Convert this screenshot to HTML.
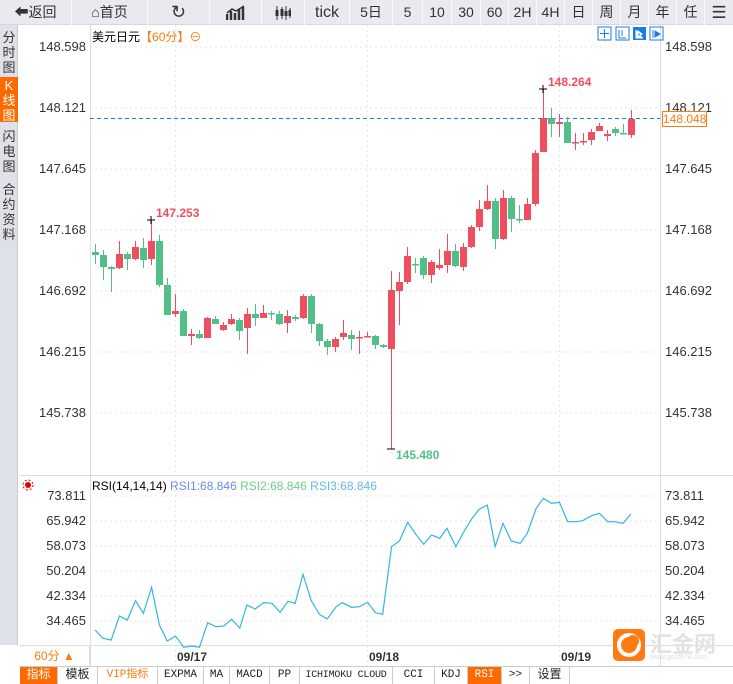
<!DOCTYPE html>
<html><head><meta charset="utf-8"><style>
*{margin:0;padding:0;box-sizing:border-box}
body{width:733px;height:684px;overflow:hidden;background:#fff;font-family:"Liberation Sans","Noto Sans CJK SC",sans-serif;position:relative;color:#333}
.top{position:absolute;left:0;top:0;width:733px;height:25px;background:#e9e9ef;border-bottom:1px solid #d6d6de}
.top div{position:absolute;top:0;height:25px;line-height:25px;text-align:center;font-size:14px;color:#333;border-right:1px solid #fafafc;white-space:nowrap}
.side{position:absolute;left:0;top:25px;width:18px;height:620px;background:#dfe1e8;border-right:1px solid #ccc}
.side div{position:absolute;left:0;width:18px;font-size:13px;line-height:15px;text-align:center;color:#333}
.ax{position:absolute;font-size:13px;color:#333;line-height:14px}
.bot{position:absolute;top:667px;height:17px;line-height:17px;font-size:11px;font-family:"Liberation Mono","Noto Sans CJK SC",monospace;text-align:center;border-right:1px solid #ccc;color:#222;white-space:nowrap;overflow:hidden}
</style></head><body>
<div class="top">
<div style="left:0;width:72px">&#x2B05;&#xFE0E;返回</div>
<div style="left:72px;width:76px">&#x2302;首页</div>
<div style="left:148px;width:62px;font-size:18px">&#x21BB;</div>
<div style="left:210px;width:52px"><svg width="20" height="16" viewBox="0 0 20 16" style="vertical-align:middle"><path d="M1 15V9M5 15V6M9 15V8M13 15V4M17 15V2" stroke="#333" stroke-width="2.5"/><path d="M1 8L6 4L10 6L18 1" stroke="#333" stroke-width="1.5" fill="none"/></svg></div>
<div style="left:262px;width:43px"><svg width="16" height="14" viewBox="0 0 16 14" style="vertical-align:middle"><path d="M2 0V14M7 1V13M11 0V14M15 2V12" stroke="#333" stroke-width="1"/><rect x="0.5" y="4" width="3" height="6" fill="#333"/><rect x="5.5" y="3" width="3" height="7" fill="#333"/><rect x="9.5" y="5" width="3" height="5" fill="#333"/><rect x="13.5" y="4" width="3" height="6" fill="#333"/></svg></div>
<div style="left:305px;width:45px;font-size:16px">tick</div>
<div style="left:350px;width:43px">5日</div>
<div style="left:393px;width:30px">5</div>
<div style="left:423px;width:29px">10</div>
<div style="left:452px;width:29px">30</div>
<div style="left:481px;width:28px">60</div>
<div style="left:509px;width:28px">2H</div>
<div style="left:537px;width:28px">4H</div>
<div style="left:565px;width:28px">日</div>
<div style="left:593px;width:28px">周</div>
<div style="left:621px;width:28px">月</div>
<div style="left:649px;width:28px">年</div>
<div style="left:677px;width:28px">任</div>
<div style="left:705px;width:28px;font-size:17px;border:none">&#x2630;</div>
</div>
<div class="side">
<div style="top:5px">分<br>时<br>图</div>
<div style="top:52px;height:45px;background:#ff6a00;color:#fff;padding-top:1px">K<br>线<br>图</div>
<div style="top:104px">闪<br>电<br>图</div>
<div style="top:157px">合<br>约<br>资<br>料</div>
</div>
<svg style="position:absolute;left:0;top:0" width="733" height="684" id="c">
<g stroke="#e6e6e6" stroke-dasharray="2,3" stroke-width="1">
<line x1="90" x2="660" y1="47" y2="47"/><line x1="90" x2="660" y1="108" y2="108"/><line x1="90" x2="660" y1="169" y2="169"/><line x1="90" x2="660" y1="230" y2="230"/><line x1="90" x2="660" y1="291" y2="291"/><line x1="90" x2="660" y1="352" y2="352"/><line x1="90" x2="660" y1="413" y2="413"/>
<line x1="90" x2="660" y1="496" y2="496"/><line x1="90" x2="660" y1="521" y2="521"/><line x1="90" x2="660" y1="546" y2="546"/><line x1="90" x2="660" y1="571" y2="571"/><line x1="90" x2="660" y1="596" y2="596"/><line x1="90" x2="660" y1="621" y2="621"/>
<line x1="175.5" x2="175.5" y1="25" y2="666"/><line x1="367.5" x2="367.5" y1="25" y2="666"/><line x1="559.5" x2="559.5" y1="25" y2="666"/>
</g>
<line x1="90.5" x2="90.5" y1="25" y2="667" stroke="#ddd"/>
<line x1="660.5" x2="660.5" y1="25" y2="667" stroke="#ddd"/>
<line x1="19" x2="733" y1="475.5" y2="475.5" stroke="#ddd"/>
<line x1="19" x2="733" y1="645.5" y2="645.5" stroke="#ddd"/>
<line x1="19" x2="733" y1="666.5" y2="666.5" stroke="#ccc"/>
<line x1="90" x2="660" y1="118.5" y2="118.5" stroke="#1a7ee6" stroke-dasharray="4,3"/>
<g id="k"></g>
<g transform="translate(88,480) scale(0.35714,0.33333)"><polyline fill="none" stroke="#33b4e6" stroke-width="1.2" vector-effect="non-scaling-stroke" points="20,450 42,475 65,480 88,408 110,420 133,362 155,400 178,322 200,435 222,483 245,468 268,502 290,498 312,502 335,428 358,440 380,438 402,418 425,444 445,375 468,387 492,368 515,370 538,397 560,364 580,370 602,283 625,362 648,403 670,417 695,380 712,368 738,382 760,380 783,367 805,398 825,403 850,200 872,183 895,127 918,163 940,193 962,165 985,175 1005,145 1030,200 1050,160 1072,120 1095,88 1118,75 1140,200 1162,130 1185,183 1210,190 1230,160 1255,85 1275,55 1298,70 1320,67 1343,125 1368,125 1385,122 1410,107 1432,100 1455,125 1475,125 1498,130 1520,102"/></g>
<path d="M147 220h8M151 216v8M539 89h8M543 85v8M387 449h8" stroke="#000" stroke-width="1"/>
<g fill="#1a7ee6"><rect x="598" y="27" width="13" height="13" fill="none" stroke="#1a7ee6"/><rect x="616" y="27" width="13" height="13" fill="none" stroke="#1a7ee6"/><rect x="633" y="27" width="13" height="13"/><rect x="650" y="27" width="13" height="13" fill="none" stroke="#1a7ee6"/>
<path d="M604.5 29v9M600 33.5h9" stroke="#1a7ee6" fill="none"/><path d="M619 30v8h7M622 30v6" stroke="#1a7ee6" fill="none"/><path d="M636 30v8h7M638 31l4 3-4 3z" stroke="#fff" fill="#fff"/><path d="M653 30v8M655 31l5 3-5 3z" stroke="#1a7ee6"/></g>
<circle cx="28" cy="485" r="3" fill="#e00"/><circle cx="28" cy="485" r="5" fill="none" stroke="#e00" stroke-dasharray="2,2"/>
<rect x="613" y="629" width="32" height="32" rx="5" fill="#ff7a10"/><circle cx="629" cy="645" r="10" fill="none" stroke="#fff" stroke-width="4"/><circle cx="633" cy="641" r="6" fill="#ff7a10"/>
</svg>
<div style="position:absolute;left:92px;top:28px;font-size:12px;color:#000">美元日元<span style="color:#ff7a10">【60分】⊖</span></div>
<div class="ax" style="right:647px;top:40px">148.598</div><div class="ax" style="right:647px;top:101px">148.121</div><div class="ax" style="right:647px;top:162px">147.645</div><div class="ax" style="right:647px;top:223px">147.168</div><div class="ax" style="right:647px;top:284px">146.692</div><div class="ax" style="right:647px;top:345px">146.215</div><div class="ax" style="right:647px;top:406px">145.738</div>
<div class="ax" style="left:665px;top:40px">148.598</div><div class="ax" style="left:665px;top:101px">148.121</div><div class="ax" style="left:665px;top:162px">147.645</div><div class="ax" style="left:665px;top:223px">147.168</div><div class="ax" style="left:665px;top:284px">146.692</div><div class="ax" style="left:665px;top:345px">146.215</div><div class="ax" style="left:665px;top:406px">145.738</div>
<div style="position:absolute;left:662px;top:111px;width:45px;height:16px;border:1px solid #ff7a10;background:#fff;color:#ff7a10;font-size:12px;line-height:14px;text-align:center">148.048</div>
<div style="position:absolute;left:156px;top:206px;font-size:12px;font-weight:bold;color:#ee4e5e">147.253</div>
<div style="position:absolute;left:548px;top:75px;font-size:12px;font-weight:bold;color:#ee4e5e">148.264</div>
<div style="position:absolute;left:396px;top:448px;font-size:12px;font-weight:bold;color:#52be88">145.480</div>
<div style="position:absolute;left:92px;top:479px;font-size:12px;color:#000">RSI(14,14,14) <span style="color:#6b8cf0">RSI1:68.846</span> <span style="color:#6ccc90">RSI2:68.846</span> <span style="color:#66b8e6">RSI3:68.846</span></div>
<div class="ax" style="right:647px;top:489px">73.811</div><div class="ax" style="right:647px;top:514px">65.942</div><div class="ax" style="right:647px;top:539px">58.073</div><div class="ax" style="right:647px;top:564px">50.204</div><div class="ax" style="right:647px;top:589px">42.334</div><div class="ax" style="right:647px;top:614px">34.465</div>
<div class="ax" style="left:665px;top:489px">73.811</div><div class="ax" style="left:665px;top:514px">65.942</div><div class="ax" style="left:665px;top:539px">58.073</div><div class="ax" style="left:665px;top:564px">50.204</div><div class="ax" style="left:665px;top:589px">42.334</div><div class="ax" style="left:665px;top:614px">34.465</div>
<div style="position:absolute;left:650px;top:627px;font-size:22px;color:#e2e2e2;font-weight:bold">汇金网</div>
<div style="position:absolute;left:650px;top:654px;font-size:7px;color:#ddd">www.gold678.com</div>
<div style="position:absolute;left:20px;top:646px;width:70px;height:20px;line-height:20px;text-align:center;color:#ff7a10;font-size:12px;border-right:1px solid #ddd">60分 ▲</div>
<div style="position:absolute;left:177px;top:650px;font-size:12px;font-weight:bold">09/17</div>
<div style="position:absolute;left:369px;top:650px;font-size:12px;font-weight:bold">09/18</div>
<div style="position:absolute;left:561px;top:650px;font-size:12px;font-weight:bold">09/19</div>
<div class="bot" style="left:20px;width:38px;background:#ff6a00;color:#fff;font-size:12px">指标</div>
<div class="bot" style="left:58px;width:40px;font-size:12px">模板</div>
<div class="bot" style="left:98px;width:60px;color:#ff7a10">VIP指标</div>
<div class="bot" style="left:158px;width:46px">EXPMA</div>
<div class="bot" style="left:204px;width:26px">MA</div>
<div class="bot" style="left:230px;width:40px">MACD</div>
<div class="bot" style="left:270px;width:30px">PP</div>
<div class="bot" style="left:300px;width:93px;font-size:10px;letter-spacing:-0.2px">ICHIMOKU CLOUD</div>
<div class="bot" style="left:393px;width:42px">CCI</div>
<div class="bot" style="left:435px;width:33px">KDJ</div>
<div class="bot" style="left:468px;width:34px;background:#ff6a00;color:#fff">RSI</div>
<div class="bot" style="left:502px;width:28px">&gt;&gt;</div>
<div class="bot" style="left:530px;width:40px;font-size:12px">设置</div>
<script>
var d=[[95,0,252,255,244,264],[103,0,255,267,250,280],[111,0,267,269,266,292],[119,1,254,268,241,269],[127,0,254,259,252,270],[135,1,247,259,241,260],[143,0,248,260,238,268],[151,1,241,259,220,265],[159,0,241,285,235,287],[167,0,285,315,278,315],[175,1,311,314,294,317],[183,0,311,336,309,336],[191,1,334,336,329,345],[199,0,334,338,330,339],[207,1,318,338,317,338],[215,0,319,324,316,324],[223,1,325,330,322,331],[231,1,319,324,314,325],[239,0,320,331,318,340],[247,1,314,328,308,354],[255,0,314,318,304,326],[263,1,313,318,305,318],[271,0,313,314,311,320],[279,0,314,324,311,325],[287,1,316,323,310,333],[295,0,317,319,315,321],[303,1,296,318,294,319],[311,0,296,324,294,333],[319,0,324,341,323,346],[327,0,341,347,339,355],[335,1,339,347,337,352],[343,1,333,337,320,340],[351,0,335,339,330,350],[359,1,337,338,331,354],[367,1,336,337,332,337],[375,0,336,345,335,349],[383,0,345,347,344,348],[391,1,290,349,271,449],[399,1,282,291,272,325],[407,1,256,282,247,284],[415,0,264,265,258,273],[423,0,258,275,256,279],[431,1,262,275,260,283],[439,1,265,268,249,270],[447,1,251,265,234,273],[455,0,251,266,244,267],[463,1,247,267,243,271],[471,1,227,247,225,248],[479,1,209,227,200,231],[487,1,201,209,185,210],[495,0,201,239,198,249],[503,1,198,239,190,240],[511,0,198,219,196,232],[519,0,219,220,205,223],[527,1,204,220,198,220],[535,1,153,204,150,206],[543,1,118,152,89,152],[551,0,118,124,108,137],[559,1,122,124,114,137],[567,0,122,143,117,143],[575,1,142,143,133,150],[583,1,141,142,133,145],[591,1,132,140,129,145],[599,1,126,131,123,131],[607,1,134,136,130,141],[615,0,129,133,127,136],[623,0,133,134,124,134],[631,1,119,135,110,138]];
var s='';d.forEach(function(c){var col=c[1]?'#ee4e5e':'#52be88';s+='<line x1="'+(c[0]+.5)+'" x2="'+(c[0]+.5)+'" y1="'+c[4]+'" y2="'+c[5]+'" stroke="'+col+'"/><rect x="'+(c[0]-3)+'" y="'+c[2]+'" width="7" height="'+Math.max(1.5,c[3]-c[2])+'" fill="'+col+'"/>';});
document.getElementById('k').innerHTML=s;
</script>
</body></html>
